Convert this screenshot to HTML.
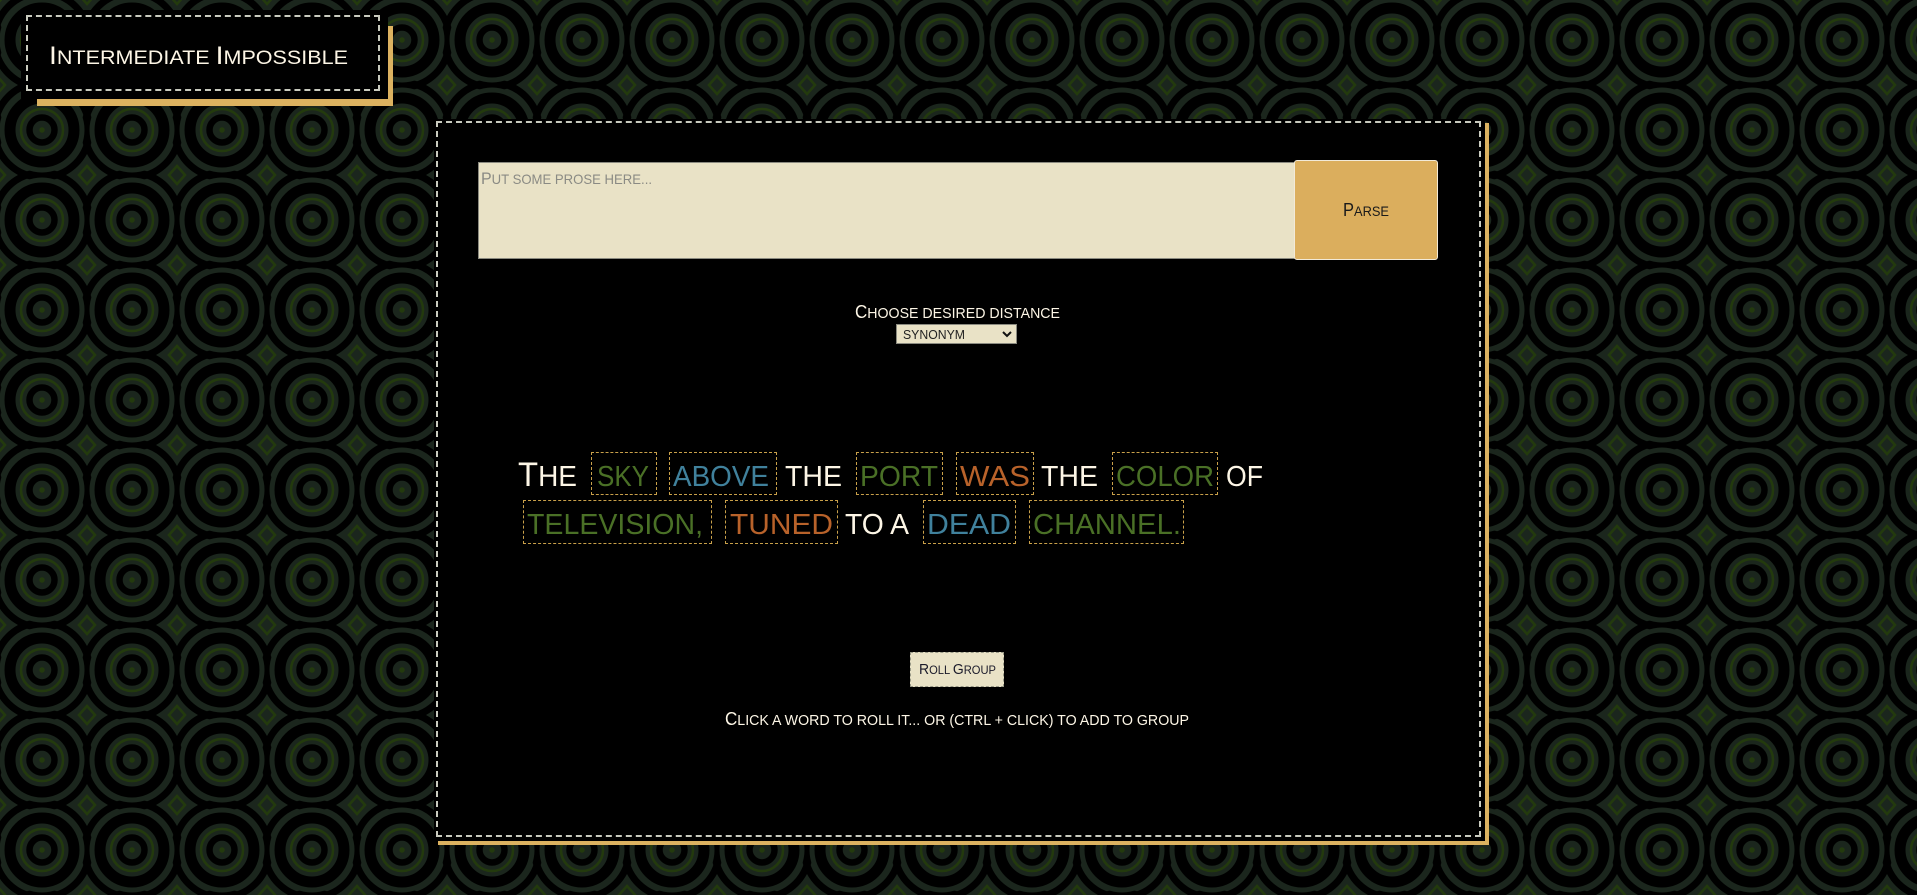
<!DOCTYPE html>
<html><head><meta charset="utf-8"><style>
html,body{margin:0;padding:0;width:1917px;height:895px;overflow:hidden;background:#1b261d;font-family:"Liberation Sans",sans-serif}
.abs{position:absolute}
</style></head><body>
<svg class="abs" style="left:0;top:0" width="1917" height="895">
<defs>
<g id="outer"><circle r="47.5" fill="none" stroke="#000" stroke-width="7"/></g>
<g id="inner">
<circle r="42.5" fill="#1b261d"/>
<circle r="32" fill="none" stroke="#000" stroke-width="11"/>
<circle r="21" fill="none" stroke="#233a0d" stroke-width="2.5"/>
<circle r="12.5" fill="none" stroke="#000" stroke-width="6.5"/>
<circle r="2.7" fill="#233a0d"/>
</g>
<pattern id="p" width="90" height="90" patternUnits="userSpaceOnUse" patternTransform="translate(-3,-5)">
<rect width="90" height="90" fill="#1b261d"/>
<use href="#outer" x="45" y="45"/><use href="#outer" x="-45" y="45"/><use href="#outer" x="135" y="45"/><use href="#outer" x="45" y="-45"/><use href="#outer" x="45" y="135"/>
<use href="#inner" x="45" y="45"/><use href="#inner" x="-45" y="45"/><use href="#inner" x="135" y="45"/><use href="#inner" x="45" y="-45"/><use href="#inner" x="45" y="135"/>
<g fill="none" stroke="#233a0d" stroke-width="2.5">
<polygon points="0,-9 8,0 0,9 -8,0"/><polygon points="90,-9 98,0 90,9 82,0"/>
<polygon points="0,81 8,90 0,99 -8,90"/><polygon points="90,81 98,90 90,99 82,90"/>
</g>
</pattern>
</defs>
<rect width="1917" height="895" fill="url(#p)"/>
</svg>

<div class="abs" style="left:37px;top:26px;width:356px;height:80px;background:#dcb260"></div>
<div class="abs" style="left:21px;top:10px;width:367px;height:89px;background:#000"></div>
<div class="abs" style="left:26px;top:15px;width:354px;height:76px;border:2px dashed #c9cbbf;box-sizing:border-box"></div>

<div class="abs" style="left:438px;top:123px;width:1051px;height:722px;background:#dcb260"></div>
<div class="abs" style="left:434px;top:119px;width:1051px;height:722px;background:#000"></div>
<div class="abs" style="left:436px;top:121px;width:1045px;height:716px;border:2px dashed #c9cbbf;box-sizing:border-box"></div>

<div class="abs" style="left:478px;top:162px;width:817px;height:97px;background:#e9e2c6;border:1px solid #8a8a80;box-sizing:border-box"></div>
<div class="abs" style="left:1294px;top:160px;width:144px;height:100px;background:#dbae5d;border:1px solid #f2ead8;border-radius:3px;box-sizing:border-box"></div>

<div class="abs" style="left:896px;top:324px;width:121px;height:20px;background:#e9e2c6;border:1px solid #8a8a80;box-sizing:border-box"></div>

<div class="abs" style="left:910px;top:652px;width:94px;height:35px;background:#e9e2c6;border:1px dashed #9a9a88;box-sizing:border-box"></div>

<div class="abs" style="left:591px;top:452px;width:66px;height:43px;border:1px dashed #c9a04a;box-sizing:border-box"></div>
<div class="abs" style="left:669px;top:452px;width:108px;height:43px;border:1px dashed #c9a04a;box-sizing:border-box"></div>
<div class="abs" style="left:856px;top:452px;width:87px;height:43px;border:1px dashed #c9a04a;box-sizing:border-box"></div>
<div class="abs" style="left:956px;top:452px;width:78px;height:43px;border:1px dashed #c9a04a;box-sizing:border-box"></div>
<div class="abs" style="left:1112px;top:452px;width:106px;height:43px;border:1px dashed #c9a04a;box-sizing:border-box"></div>
<div class="abs" style="left:523px;top:500px;width:189px;height:44px;border:1px dashed #c9a04a;box-sizing:border-box"></div>
<div class="abs" style="left:725px;top:500px;width:113px;height:44px;border:1px dashed #c9a04a;box-sizing:border-box"></div>
<div class="abs" style="left:923px;top:500px;width:93px;height:44px;border:1px dashed #c9a04a;box-sizing:border-box"></div>
<div class="abs" style="left:1029px;top:500px;width:155px;height:44px;border:1px dashed #c9a04a;box-sizing:border-box"></div>

<svg class="abs" style="left:0;top:0" width="1917" height="895" font-family="Liberation Sans, sans-serif">
<text x="49" y="64" fill="#fdf6e6" font-size="25" textLength="299" lengthAdjust="spacingAndGlyphs">I<tspan font-size="19">NTERMEDIATE </tspan>I<tspan font-size="19">MPOSSIBLE</tspan></text>

<text x="481" y="184" fill="#8a8a84" font-size="17" textLength="171" lengthAdjust="spacingAndGlyphs">P<tspan font-size="14">UT SOME PROSE HERE...</tspan></text>
<text x="1343" y="216" fill="#1a1a1a" font-size="18" textLength="46" lengthAdjust="spacingAndGlyphs">P<tspan font-size="14">ARSE</tspan></text>
<text x="855" y="318" fill="#fdf6e6" font-size="18" textLength="205" lengthAdjust="spacingAndGlyphs">C<tspan font-size="15">HOOSE DESIRED DISTANCE</tspan></text>
<text x="903" y="339" fill="#222" font-size="13" textLength="62" lengthAdjust="spacingAndGlyphs">SYNONYM</text>
<path d="M1003 332 l4 4 l4 -4" fill="none" stroke="#111" stroke-width="2"/>

<g font-size="29">
<text x="518" y="486" fill="#fdf6e6" textLength="59" lengthAdjust="spacingAndGlyphs"><tspan font-size="34">T</tspan>HE</text>
<text x="597" y="486" fill="#4a7026" textLength="52" lengthAdjust="spacingAndGlyphs">SKY</text>
<text x="673" y="486" fill="#40819c" textLength="96" lengthAdjust="spacingAndGlyphs">ABOVE</text>
<text x="785" y="486" fill="#fdf6e6" textLength="57" lengthAdjust="spacingAndGlyphs">THE</text>
<text x="860" y="486" fill="#4a7026" textLength="78" lengthAdjust="spacingAndGlyphs">PORT</text>
<text x="960" y="486" fill="#b8622a" textLength="70" lengthAdjust="spacingAndGlyphs">WAS</text>
<text x="1041" y="486" fill="#fdf6e6" textLength="57" lengthAdjust="spacingAndGlyphs">THE</text>
<text x="1116" y="486" fill="#4a7026" textLength="98" lengthAdjust="spacingAndGlyphs">COLOR</text>
<text x="1226" y="486" fill="#fdf6e6" textLength="37" lengthAdjust="spacingAndGlyphs">OF</text>

<text x="527" y="534" fill="#4a7026" textLength="176" lengthAdjust="spacingAndGlyphs">TELEVISION,</text>
<text x="730" y="534" fill="#b8622a" textLength="103" lengthAdjust="spacingAndGlyphs">TUNED</text>
<text x="845" y="534" fill="#fdf6e6" textLength="64" lengthAdjust="spacingAndGlyphs">TO A</text>
<text x="927" y="534" fill="#40819c" textLength="84" lengthAdjust="spacingAndGlyphs">DEAD</text>
<text x="1033" y="534" fill="#4a7026" textLength="148" lengthAdjust="spacingAndGlyphs">CHANNEL.</text>
</g>

<text x="919" y="674" fill="#1a1a2a" font-size="15" textLength="77" lengthAdjust="spacingAndGlyphs">R<tspan font-size="12">OLL </tspan>G<tspan font-size="12">ROUP</tspan></text>
<text x="725" y="725" fill="#fdf6e6" font-size="18" textLength="464" lengthAdjust="spacingAndGlyphs">C<tspan font-size="15">LICK A WORD TO ROLL IT... OR (CTRL + CLICK) TO ADD TO GROUP</tspan></text>
</svg>
</body></html>
